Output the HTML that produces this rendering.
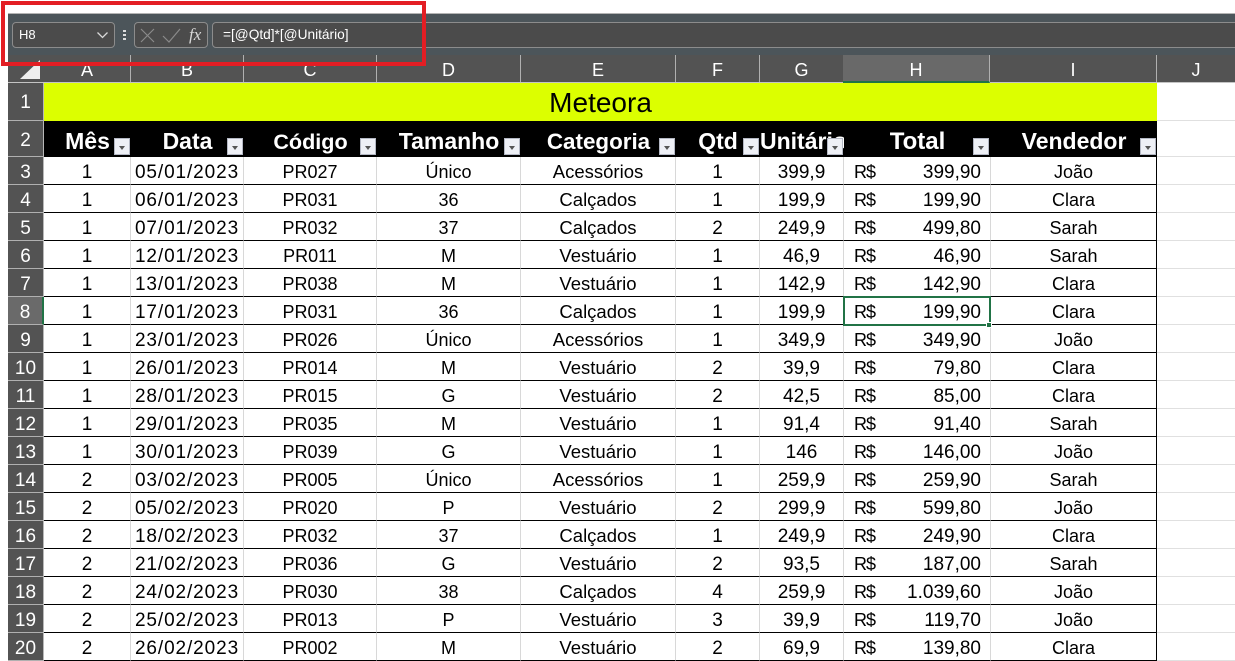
<!DOCTYPE html>
<html><head><meta charset="utf-8"><style>
html,body{margin:0;padding:0;background:#fff;width:1235px;height:660px;overflow:hidden;font-family:"Liberation Sans",sans-serif}
.a{position:absolute;box-sizing:border-box}
#band{left:8px;top:13px;width:1227px;height:42px;background:#4c555a;border-top:1px solid #b4b4b4}
.box{height:26px;top:22px;background:#4b4b4b;border:1px solid #8c8c8c;border-radius:4px;color:#fff;font-size:13px;line-height:24px}
#ch{left:8px;top:55px;width:1227px;height:28px;background:#535353;border-bottom:1px solid #c4c4c4}
.c{position:absolute;top:0;height:27px;border-right:1px solid #b0b0b0;color:#fff;font-size:18px;line-height:30px;text-align:center;box-sizing:border-box}
table{position:absolute;left:8px;top:83px;border-collapse:separate;border-spacing:0;table-layout:fixed;width:1227px}
td{padding:5px 0 0;box-sizing:border-box;height:28px;text-align:center;vertical-align:top;font-size:18px;color:#000;border-right:1px solid #d8d8d8;border-bottom:1px solid #000;white-space:nowrap;overflow:hidden;line-height:21px}
td:first-child{background:#535353;color:#fff;font-size:19px;line-height:22px;border-right:1px solid #b8b8b8;border-bottom:1px solid #b0b0b0}
td:last-child{border-right:0;border-bottom:1px solid #e0e0e0}
td:nth-child(10){border-right:1px solid #000}
td:nth-child(3){font-size:19px;letter-spacing:.9px;line-height:22px}
td:nth-child(6){font-size:18.5px;line-height:20px}
td:nth-child(8),td:nth-child(2),td:nth-child(7){font-size:19px;line-height:22px}
td:nth-child(9){font-size:19px;line-height:22px}
td:nth-child(9) div{position:relative;height:22px;text-align:right;padding-right:9px}
td:nth-child(9) span{position:absolute;left:10px;top:0;font-size:18px;letter-spacing:-1px;line-height:21px}
tr.t td{height:38px;padding:2px 0 0;background:#dcff00;border:0;font-size:28px;line-height:36px;letter-spacing:0}
tr.t td:first-child{background:#535353;color:#fff;font-size:19px;line-height:35px;border-right:1px solid #b8b8b8;border-bottom:1px solid #b0b0b0}
tr.t td:last-child{background:#fff;line-height:35px;border-bottom:1px solid #e0e0e0}
tr.h td{height:36px;padding:6px 0 0;background:#000;color:#fff;font-weight:bold;font-size:23px;border:0;position:relative;line-height:29px;letter-spacing:0}
tr.h td:first-child{background:#535353;font-weight:normal;font-size:19px;line-height:28px;border-right:1px solid #b8b8b8;border-bottom:1px solid #b0b0b0}
tr.h td:last-child{background:#fff;line-height:28px;border-bottom:1px solid #e0e0e0}
.f{position:absolute;right:1px;top:17px;width:16px;height:17px;box-sizing:border-box;background:#eef0f6;border:1px solid #b4b8c4}
.f:after{content:"";position:absolute;left:4px;top:7px;border:3.5px solid transparent;border-top:4px solid #555;border-bottom:0}
tr.s td:first-child{background:#6a6a6a;border-right:2px solid #217346}
</style></head><body>
<div class="a" id="band"></div>
<div class="a box" style="left:12px;width:103px;padding-left:6px">H8</div>
<svg class="a" style="left:96px;top:31px" width="14" height="9"><path d="M1.5 1.5L6.5 6.5L11.5 1.5" fill="none" stroke="#d8d8d8" stroke-width="1.3"/></svg>
<div class="a" style="left:123px;top:30px;width:3px;height:2px;background:#ddd;box-shadow:0 4px #ddd,0 8px #ddd"></div>
<div class="a box" style="left:134px;width:74px"></div>
<svg class="a" style="left:134px;top:22px" width="74" height="26"><path d="M7 7L20 20M20 7L7 20" fill="none" stroke="#8a8a8a" stroke-width="1.2"/><path d="M29 14L35 20L46 7" fill="none" stroke="#8a8a8a" stroke-width="1.2"/><text x="55" y="18" font-family="Liberation Serif" font-style="italic" font-size="17" fill="#d8d8d8">fx</text></svg>
<div class="a box" style="left:212px;width:1040px;padding-left:10px;font-size:13.7px">=[@Qtd]*[@Unitário]</div>
<div class="a" id="ch">
<svg class="a" style="left:0;top:0" width="36" height="27"><path d="M12 24L32 24L32 5Z" fill="#eee"/></svg>
<div class="c" style="left:36px;width:87px">A</div>
<div class="c" style="left:123px;width:113px">B</div>
<div class="c" style="left:236px;width:133px">C</div>
<div class="c" style="left:369px;width:144px">D</div>
<div class="c" style="left:513px;width:155px">E</div>
<div class="c" style="left:668px;width:84px">F</div>
<div class="c" style="left:752px;width:84px">G</div>
<div class="c" style="left:835px;width:147px;background:#696969;height:28px;border-bottom:2px solid #217346">H</div>
<div class="c" style="left:982px;width:167px">I</div>
<div class="c" style="left:1149px;width:78px;border:0">J</div>
</div>
<table>
<colgroup><col style="width:36px"><col style="width:87px"><col style="width:113px"><col style="width:133px"><col style="width:144px"><col style="width:155px"><col style="width:84px"><col style="width:84px"><col style="width:147px"><col style="width:166px"><col style="width:78px"></colgroup>
<tr class="t"><td>1</td><td colspan="9">Meteora</td><td></td></tr>
<tr class="h"><td>2</td><td>Mês<i class="f"></i></td><td>Data<i class="f"></i></td><td style="font-size:21.6px">Código<i class="f"></i></td><td>Tamanho<i class="f"></i></td><td style="font-size:22.4px">Categoria<i class="f"></i></td><td>Qtd<i class="f"></i></td><td style="text-align:left">Unitário<i class="f"></i></td><td style="font-size:24px">Total<i class="f" style="right:2px"></i></td><td>Vendedor<i class="f"></i></td><td></td></tr>
<tr><td>3</td><td>1</td><td>05/01/2023</td><td>PR027</td><td>Único</td><td>Acessórios</td><td>1</td><td>399,9</td><td><div><span>R$</span>399,90</div></td><td>João</td><td></td></tr>
<tr><td>4</td><td>1</td><td>06/01/2023</td><td>PR031</td><td>36</td><td>Calçados</td><td>1</td><td>199,9</td><td><div><span>R$</span>199,90</div></td><td>Clara</td><td></td></tr>
<tr><td>5</td><td>1</td><td>07/01/2023</td><td>PR032</td><td>37</td><td>Calçados</td><td>2</td><td>249,9</td><td><div><span>R$</span>499,80</div></td><td>Sarah</td><td></td></tr>
<tr><td>6</td><td>1</td><td>12/01/2023</td><td>PR011</td><td>M</td><td>Vestuário</td><td>1</td><td>46,9</td><td><div><span>R$</span>46,90</div></td><td>Sarah</td><td></td></tr>
<tr><td>7</td><td>1</td><td>13/01/2023</td><td>PR038</td><td>M</td><td>Vestuário</td><td>1</td><td>142,9</td><td><div><span>R$</span>142,90</div></td><td>Clara</td><td></td></tr>
<tr class="s"><td>8</td><td>1</td><td>17/01/2023</td><td>PR031</td><td>36</td><td>Calçados</td><td>1</td><td>199,9</td><td><div><span>R$</span>199,90</div></td><td>Clara</td><td></td></tr>
<tr><td>9</td><td>1</td><td>23/01/2023</td><td>PR026</td><td>Único</td><td>Acessórios</td><td>1</td><td>349,9</td><td><div><span>R$</span>349,90</div></td><td>João</td><td></td></tr>
<tr><td>10</td><td>1</td><td>26/01/2023</td><td>PR014</td><td>M</td><td>Vestuário</td><td>2</td><td>39,9</td><td><div><span>R$</span>79,80</div></td><td>Clara</td><td></td></tr>
<tr><td>11</td><td>1</td><td>28/01/2023</td><td>PR015</td><td>G</td><td>Vestuário</td><td>2</td><td>42,5</td><td><div><span>R$</span>85,00</div></td><td>Clara</td><td></td></tr>
<tr><td>12</td><td>1</td><td>29/01/2023</td><td>PR035</td><td>M</td><td>Vestuário</td><td>1</td><td>91,4</td><td><div><span>R$</span>91,40</div></td><td>Sarah</td><td></td></tr>
<tr><td>13</td><td>1</td><td>30/01/2023</td><td>PR039</td><td>G</td><td>Vestuário</td><td>1</td><td>146</td><td><div><span>R$</span>146,00</div></td><td>João</td><td></td></tr>
<tr><td>14</td><td>2</td><td>03/02/2023</td><td>PR005</td><td>Único</td><td>Acessórios</td><td>1</td><td>259,9</td><td><div><span>R$</span>259,90</div></td><td>Sarah</td><td></td></tr>
<tr><td>15</td><td>2</td><td>05/02/2023</td><td>PR020</td><td>P</td><td>Vestuário</td><td>2</td><td>299,9</td><td><div><span>R$</span>599,80</div></td><td>João</td><td></td></tr>
<tr><td>16</td><td>2</td><td>18/02/2023</td><td>PR032</td><td>37</td><td>Calçados</td><td>1</td><td>249,9</td><td><div><span>R$</span>249,90</div></td><td>Clara</td><td></td></tr>
<tr><td>17</td><td>2</td><td>21/02/2023</td><td>PR036</td><td>G</td><td>Vestuário</td><td>2</td><td>93,5</td><td><div><span>R$</span>187,00</div></td><td>Sarah</td><td></td></tr>
<tr><td>18</td><td>2</td><td>24/02/2023</td><td>PR030</td><td>38</td><td>Calçados</td><td>4</td><td>259,9</td><td><div><span>R$</span>1.039,60</div></td><td>João</td><td></td></tr>
<tr><td>19</td><td>2</td><td>25/02/2023</td><td>PR013</td><td>P</td><td>Vestuário</td><td>3</td><td>39,9</td><td><div><span>R$</span>119,70</div></td><td>João</td><td></td></tr>
<tr><td>20</td><td>2</td><td>26/02/2023</td><td>PR002</td><td>M</td><td>Vestuário</td><td>2</td><td>69,9</td><td><div><span>R$</span>139,80</div></td><td>Clara</td><td></td></tr>
</table>
<div class="a" style="left:843px;top:296px;width:148px;height:30px;border:2px solid #217346"></div>
<div class="a" style="left:986px;top:322px;background:#217346;border:1px solid #fff;box-sizing:content-box;width:4px;height:4px"></div>
<div class="a" style="left:1px;top:1px;width:425px;height:65px;border:4px solid #e31e24"></div>
</body></html>
